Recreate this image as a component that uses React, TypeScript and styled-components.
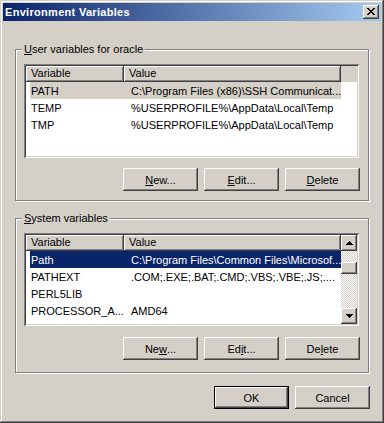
import styled, { createGlobalStyle } from "styled-components";

const GlobalStyle = createGlobalStyle`
  body {
    margin: 0;
    font-family: "Liberation Sans", Arial, sans-serif;
    font-size: 11px;
    color: #000;
  }
`;

const COL1 = 98;
const COL2 = 217;

const Window = styled.div`
  width: 384px;
  height: 423px;
  box-sizing: border-box;
  padding: 3px;
  background: #d4d0c8;
  box-shadow: inset -1px -1px #404040, inset 1px 1px #d4d0c8,
    inset -2px -2px #808080, inset 2px 2px #fff;
  display: flex;
  flex-direction: column;
`;

const TitleBar = styled.div`
  height: 18px;
  display: flex;
  align-items: center;
  padding-left: 2px;
  background: linear-gradient(to right, #0a246a, #a6caf0);
  color: #fff;
  font-weight: bold;
`;

const TitleText = styled.span`
  flex: 1;
  white-space: nowrap;
  letter-spacing: 0.3px;
`;

const raised = `
  background: #d4d0c8;
  box-shadow: inset -1px -1px #404040, inset 1px 1px #fff,
    inset -2px -2px #808080, inset 2px 2px #d4d0c8;
`;

const CloseButton = styled.div`
  ${raised}
  width: 16px;
  height: 14px;
  margin-right: 2px;
  display: flex;
  align-items: center;
  justify-content: center;
  padding: 0 1px 1px 0;
  box-sizing: border-box;
`;

const Body = styled.div`
  flex: 1;
  display: flex;
  flex-direction: column;
  padding: 0 12px;
`;

const Group = styled.section<{ $top: number; $height: number }>`
  position: relative;
  margin-top: ${(p) => p.$top}px;
  height: ${(p) => p.$height}px;
  box-sizing: border-box;
  border: 1px solid #808080;
  box-shadow: inset 1px 1px #fff, 1px 1px #fff;
  padding: 14px 0 0 8px;
`;

const Legend = styled.span`
  position: absolute;
  top: -7px;
  left: 6px;
  line-height: 13px;
  padding: 0 2px;
  background: #d4d0c8;
`;

const Key = styled.u`
  text-decoration: underline;
`;

const ListBox = styled.div<{ $height: number }>`
  width: 335px;
  height: ${(p) => p.$height}px;
  box-sizing: border-box;
  padding: 2px;
  background: #fff;
  box-shadow: inset 1px 1px #808080, inset -1px -1px #fff,
    inset 2px 2px #404040, inset -2px -2px #d4d0c8;
  display: flex;
  overflow: hidden;
`;

const ListMain = styled.div`
  flex: 1;
  display: flex;
  flex-direction: column;
  overflow: hidden;
`;

const Header = styled.div`
  display: flex;
  height: 16px;
  flex-shrink: 0;
  background: #d4d0c8;
`;

const HeaderCell = styled.div<{ $width: number }>`
  ${raised}
  width: ${(p) => p.$width}px;
  box-sizing: border-box;
  padding-left: 5px;
  line-height: 15px;
  white-space: nowrap;
  overflow: hidden;
`;

const Row = styled.div<{ $sel?: "inactive" | "active" }>`
  display: flex;
  height: 17px;
  flex-shrink: 0;
  align-items: center;
  margin-left: 4px;
  width: ${COL1 + COL2 - 4}px;
  background: ${(p) =>
    p.$sel === "active" ? "#0a246a" : p.$sel === "inactive" ? "#d4d0c8" : "transparent"};
  color: ${(p) => (p.$sel === "active" ? "#fff" : "#000")};
`;

const Cell = styled.div<{ $width: number; $pad: number }>`
  width: ${(p) => p.$width}px;
  padding-left: ${(p) => p.$pad}px;
  box-sizing: border-box;
  white-space: nowrap;
  overflow: hidden;
`;

const ScrollBar = styled.div`
  width: 16px;
  display: flex;
  flex-direction: column;
`;

const ScrollButton = styled.div`
  ${raised}
  width: 16px;
  height: 16px;
  flex-shrink: 0;
  display: flex;
  align-items: center;
  justify-content: center;
`;

const Track = styled.div`
  flex: 1;
  background: repeating-conic-gradient(#fff 0 25%, #d4d0c8 0 50%) 0 0 / 2px 2px;
`;

const Thumb = styled.div`
  ${raised}
  height: 12px;
  margin-top: 11px;
`;

const ButtonRow = styled.div<{ $top: number }>`
  width: 336px;
  margin-top: ${(p) => p.$top}px;
  display: flex;
  justify-content: flex-end;
  gap: 6px;
`;

const Button = styled.div<{ $default?: boolean }>`
  width: 75px;
  height: 23px;
  box-sizing: border-box;
  display: flex;
  align-items: center;
  justify-content: center;
  background: #d4d0c8;
  box-shadow: ${(p) =>
    p.$default
      ? "inset 0 0 0 1px #000, inset -2px -2px #404040, inset 2px 2px #fff, inset -3px -3px #808080"
      : "inset -1px -1px #404040, inset 1px 1px #fff, inset -2px -2px #808080"};
`;

const Footer = styled.div`
  margin-top: 13px;
  display: flex;
  justify-content: flex-end;
  gap: 6px;
  margin-right: -1px;
`;

const CloseGlyph = () => (
  <svg width="8" height="7" viewBox="0 0 8 7" shapeRendering="crispEdges">
    <path
      d="M0 0h2v1H0zM6 0h2v1H6zM1 1h2v1H1zM5 1h2v1H5zM2 2h4v1H2zM3 3h2v1H3zM2 4h4v1H2zM1 5h2v1H1zM5 5h2v1H5zM0 6h2v1H0zM6 6h2v1H6z"
      fill="#000"
    />
  </svg>
);

const Arrow = ({ down }: { down?: boolean }) => (
  <svg width="7" height="4" viewBox="0 0 7 4" shapeRendering="crispEdges"
    style={down ? { transform: "scaleY(-1)" } : undefined}>
    <path d="M3 0h1v1H3zM2 1h3v1H2zM1 2h5v1H1zM0 3h7v1H0z" fill="#000" />
  </svg>
);

type Item = { name: string; value: string; sel?: "inactive" | "active" };

const userVars: Item[] = [
  { name: "PATH", value: "C:\\Program Files (x86)\\SSH Communicat...", sel: "inactive" },
  { name: "TEMP", value: "%USERPROFILE%\\AppData\\Local\\Temp" },
  { name: "TMP", value: "%USERPROFILE%\\AppData\\Local\\Temp" },
];

const systemVars: Item[] = [
  { name: "Path", value: "C:\\Program Files\\Common Files\\Microsof...", sel: "active" },
  { name: "PATHEXT", value: ".COM;.EXE;.BAT;.CMD;.VBS;.VBE;.JS;...." },
  { name: "PERL5LIB", value: "" },
  { name: "PROCESSOR_A...", value: "AMD64" },
];

function VarList({ items, height, scroll }: { items: Item[]; height: number; scroll?: boolean }) {
  return (
    <ListBox $height={height}>
      <ListMain>
        <Header>
          <HeaderCell $width={COL1}>Variable</HeaderCell>
          <HeaderCell $width={COL2}>Value</HeaderCell>
        </Header>
        {items.map((it) => (
          <Row key={it.name} $sel={it.sel}>
            <Cell $width={COL1 - 4} $pad={1}>{it.name}</Cell>
            <Cell $width={COL2} $pad={7}>{it.value}</Cell>
          </Row>
        ))}
      </ListMain>
      {scroll && (
        <ScrollBar>
          <ScrollButton><Arrow /></ScrollButton>
          <Track><Thumb /></Track>
          <ScrollButton><Arrow down /></ScrollButton>
        </ScrollBar>
      )}
    </ListBox>
  );
}

export default function App() {
  return (
    <>
      <GlobalStyle />
      <Window>
        <TitleBar>
          <TitleText>Environment Variables</TitleText>
          <CloseButton><CloseGlyph /></CloseButton>
        </TitleBar>
        <Body>
          <Group $top={28} $height={152}>
            <Legend><Key>U</Key>ser variables for oracle</Legend>
            <VarList items={userVars} height={94} />
            <ButtonRow $top={10}>
              <Button><Key>N</Key>ew...</Button>
              <Button><Key>E</Key>dit...</Button>
              <Button><Key>D</Key>elete</Button>
            </ButtonRow>
          </Group>
          <Group $top={17} $height={155}>
            <Legend><Key>S</Key>ystem variables</Legend>
            <VarList items={systemVars} height={93} scroll />
            <ButtonRow $top={11}>
              <Button>Ne<Key>w</Key>...</Button>
              <Button>Ed<Key>i</Key>t...</Button>
              <Button>De<Key>l</Key>ete</Button>
            </ButtonRow>
          </Group>
          <Footer>
            <Button $default>OK</Button>
            <Button>Cancel</Button>
          </Footer>
        </Body>
      </Window>
    </>
  );
}
